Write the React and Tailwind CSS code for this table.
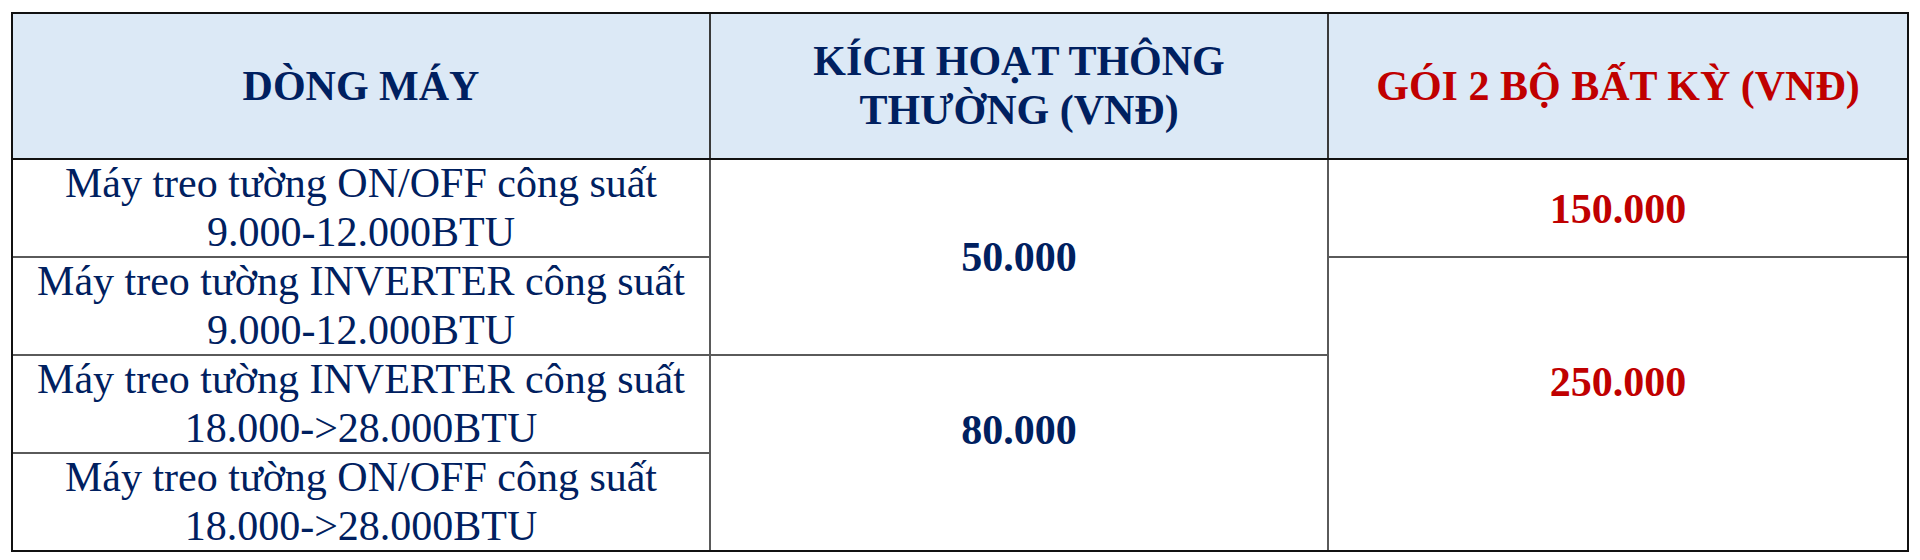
import React from 'react';

const rows = [
    ['Máy treo tường ON/OFF công suất', '9.000-12.000BTU'],
    ['Máy treo tường INVERTER công suất', '9.000-12.000BTU'],
    ['Máy treo tường INVERTER công suất', '18.000->28.000BTU'],
    ['Máy treo tường ON/OFF công suất', '18.000->28.000BTU'],
];

const App = () => {
    return (
        <div className="w-[1920px] h-[560px] bg-white pt-[12px] pl-[11px] font-['Liberation_Serif','Times_New_Roman',serif] text-[42px] leading-[49px]">
            <div className="w-[1898px] border-2 border-[#111]">
                {/* header */}
                <div className="grid grid-cols-[696px_616px_578px] gap-x-[2px] bg-[#3a3a3a]">
                    <div className="h-[144px] bg-[#dce9f6] flex items-center justify-center font-bold text-[#002060]">
                        DÒNG MÁY
                    </div>
                    <div className="h-[144px] bg-[#dce9f6] flex items-center justify-center text-center font-bold text-[#002060]">
                        KÍCH HOẠT THÔNG<br />THƯỜNG (VNĐ)
                    </div>
                    <div className="h-[144px] bg-[#dce9f6] flex items-center justify-center font-bold text-[#c00000]">
                        GÓI 2 BỘ BẤT KỲ (VNĐ)
                    </div>
                </div>
                <div className="h-[2px] bg-[#111]"></div>

                {/* body */}
                <div className="grid grid-cols-[696px_616px_578px] grid-rows-[96px_96px_96px_96px] gap-[2px] bg-[#5a5a5a]">
                    {rows.map((r, i) => (
                        <div
                            key={i}
                            className="bg-white flex flex-col items-center justify-center text-center text-[#002060] col-start-1"
                            style={{ gridRowStart: i + 1 }}
                        >
                            <span className="whitespace-nowrap">{r[0]}</span>
                            <span className="whitespace-nowrap">{r[1]}</span>
                        </div>
                    ))}
                    <div className="bg-white col-start-2 row-start-1 row-span-2 flex items-center justify-center font-bold text-[#002060]">
                        50.000
                    </div>
                    <div className="bg-white col-start-2 row-start-3 row-span-2 flex items-center justify-center pb-[46px] font-bold text-[#002060]">
                        80.000
                    </div>
                    <div className="bg-white col-start-3 row-start-1 flex items-center justify-center pt-[2px] font-bold text-[#c00000]">
                        150.000
                    </div>
                    <div className="bg-white col-start-3 row-start-2 row-span-3 flex items-center justify-center pb-[44px] font-bold text-[#c00000]">
                        250.000
                    </div>
                </div>
            </div>
        </div>
    );
};

export default App;
